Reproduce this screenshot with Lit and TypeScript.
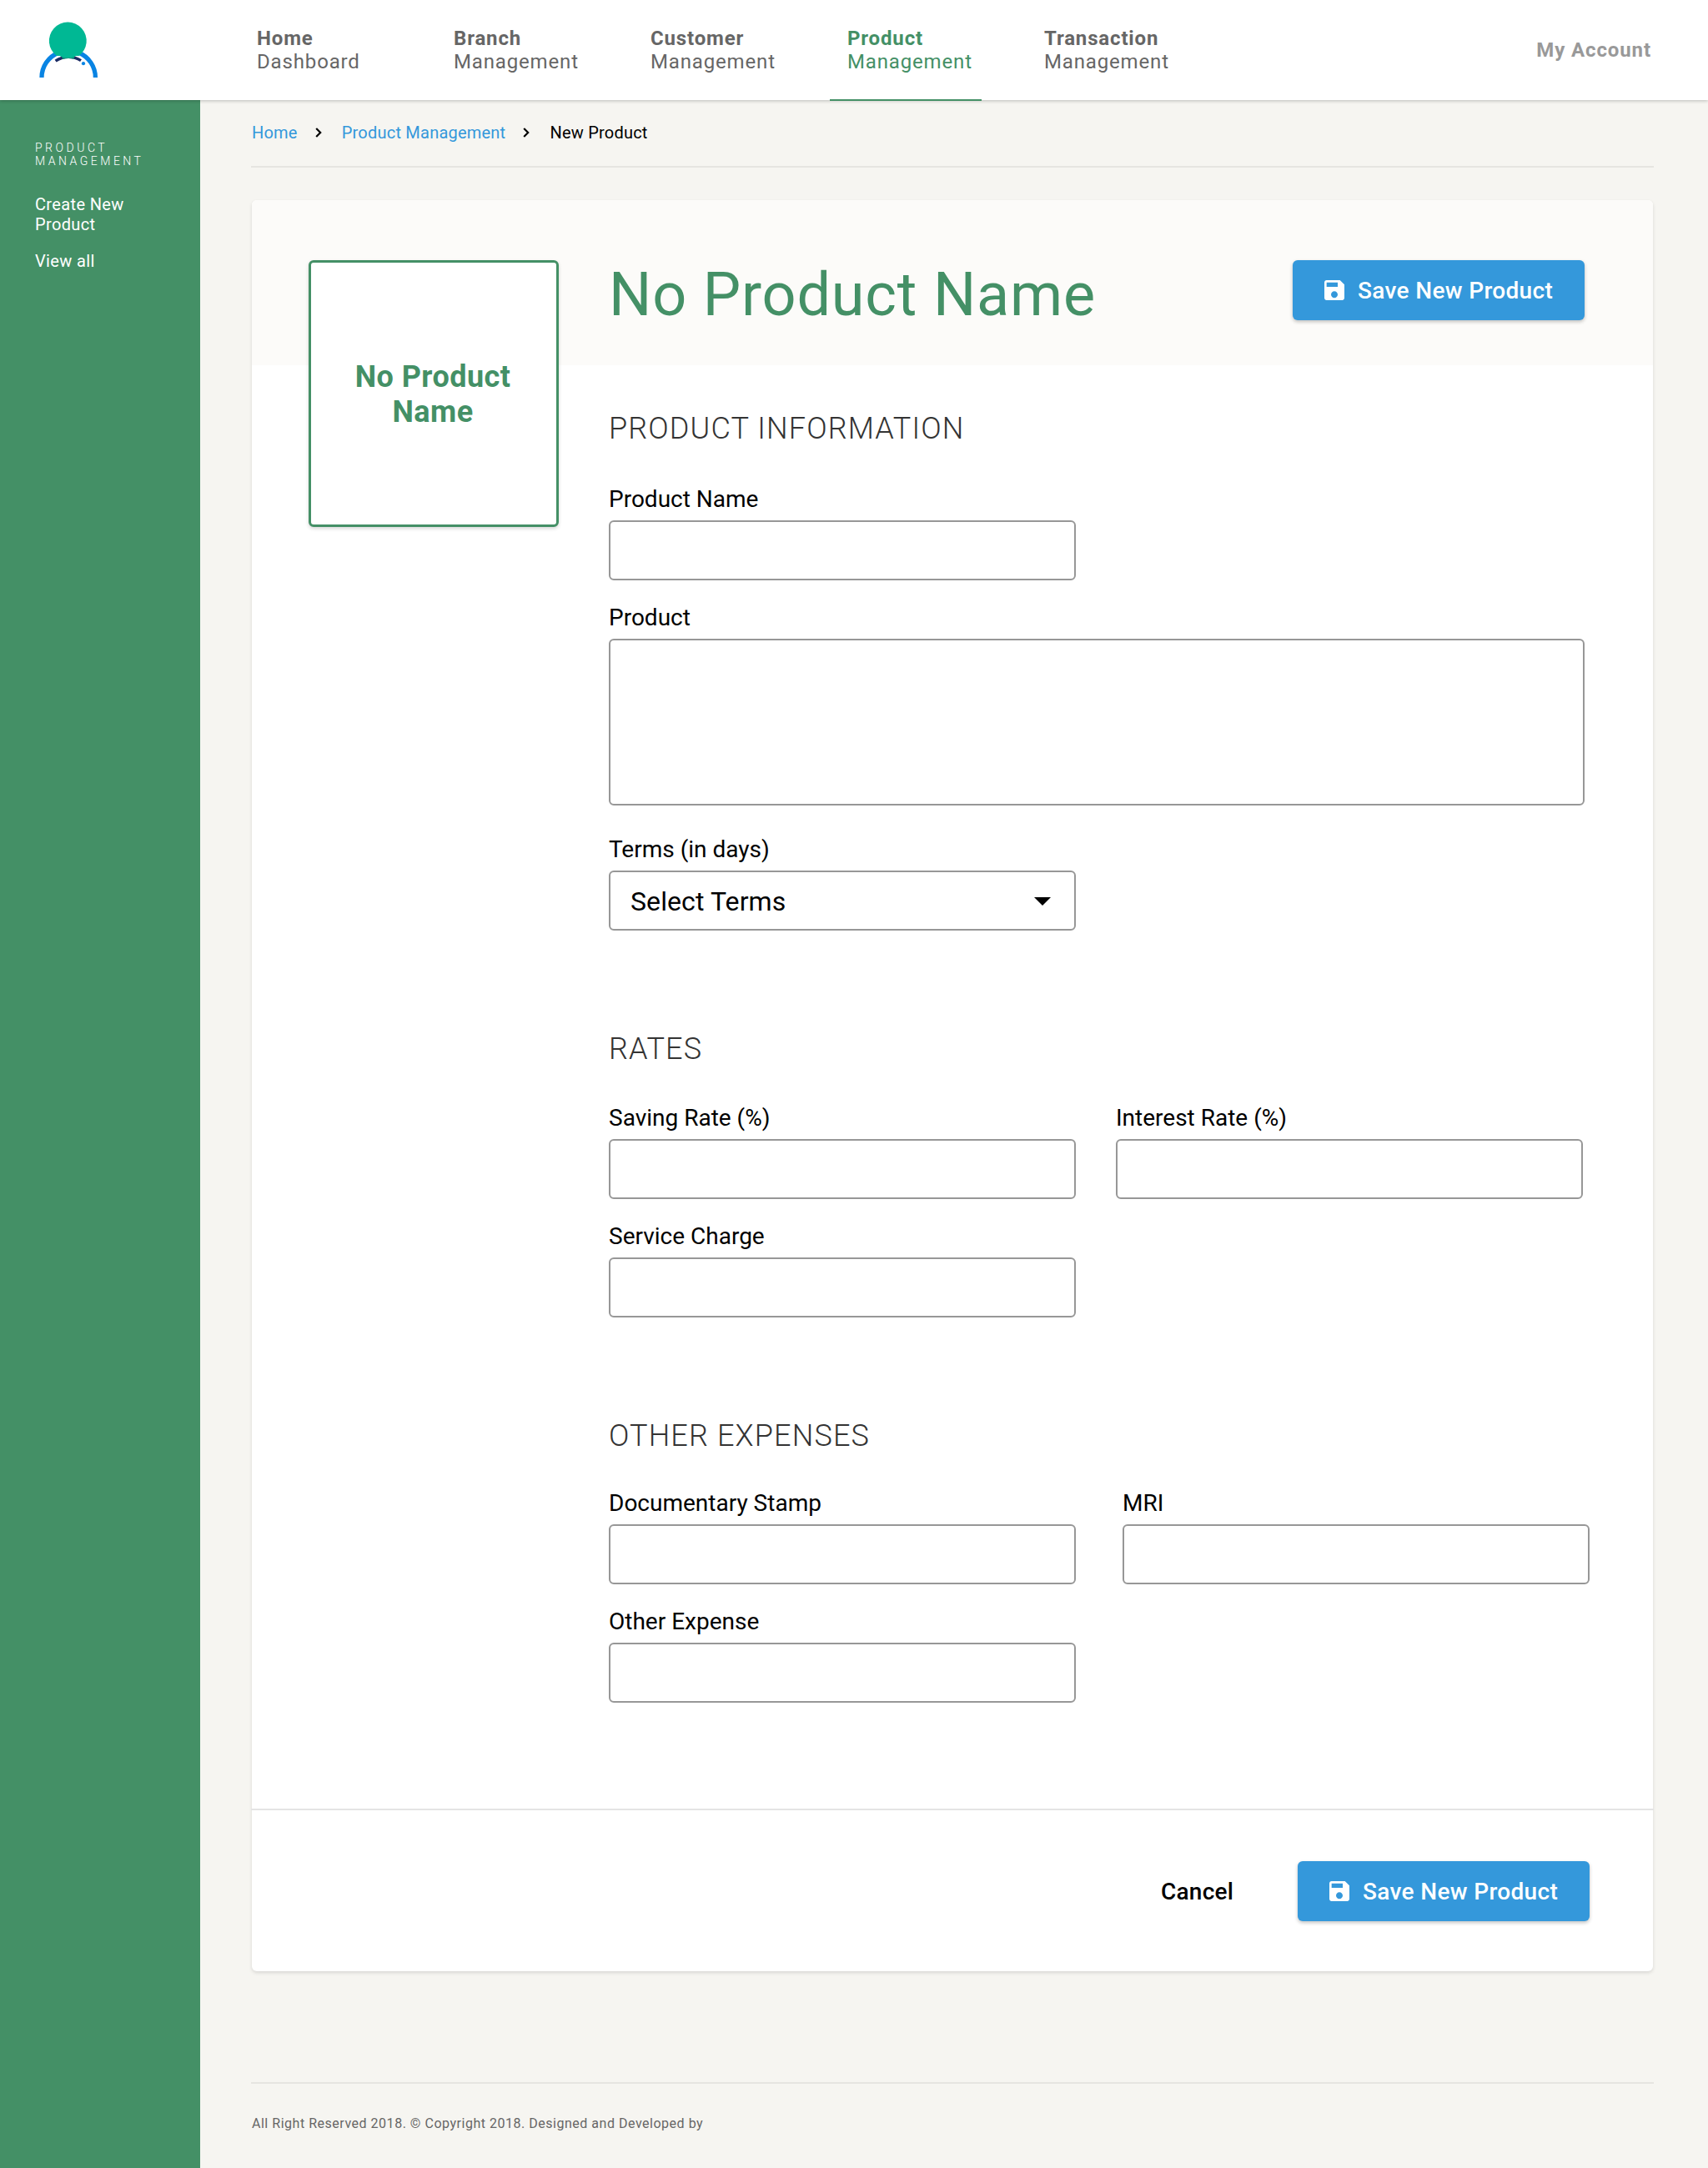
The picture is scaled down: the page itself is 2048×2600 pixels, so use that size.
import { LitElement, html, css, svg, nothing } from "lit";
import { customElement, property } from "lit/decorators.js";
import { classMap } from "lit/directives/class-map.js";

@customElement("save-button")
class SaveButton extends LitElement {
  static styles = css`
    :host { display: block; }
    .save {
      box-sizing: border-box; display: flex; align-items: center; gap: 12px;
      width: 350px; height: 72px; margin: 0; padding: 0 0 0 34px; border: 0; border-radius: 6px;
      background: #3498db; color: #fff; box-shadow: 0 2px 4px rgba(0, 0, 0, 0.24);
      font: 500 28px/32px Roboto, sans-serif; letter-spacing: 0.34px; white-space: nowrap;
    }
    .icon { flex: none; width: 32px; height: 32px; fill: #fff; }
    .text { padding-top: 2px; }
  `;
  render() {
    return html`<button class="save">
      <svg class="icon" viewBox="0 0 24 24"><path d="M17 3H5c-1.11 0-2 .9-2 2v14c0 1.1.89 2 2 2h14c1.1 0 2-.9 2-2V7l-4-4zm-5 16c-1.66 0-3-1.34-3-3s1.34-3 3-3 3 1.34 3 3-1.34 3-3 3zm3-10H5V5h10v4z"/></svg>
      <span class="text">Save New Product</span>
    </button>`;
  }
}

@customElement("form-field")
class FormField extends LitElement {
  @property() label = "";
  @property() kind: "input" | "area" | "select" = "input";
  static styles = css`
    :host { display: block; }
    .field { display: flex; flex-direction: column; gap: 8px; font: 28px/34px Roboto, sans-serif; color: #000; }
    .control {
      box-sizing: border-box; display: block; width: 560px; height: 72px; margin: 0; padding: 0 25px;
      border: 2px solid #979797; border-radius: 6px; background: #fff; outline: none;
      font: 32px/38px Roboto, sans-serif; color: #000;
    }
    .area { width: 1170px; height: 200px; padding: 15px 25px; resize: none; }
    .select { display: flex; align-items: center; justify-content: space-between; padding: 2px 28px 0 24px; letter-spacing: 0.1px; }
    .caret { width: 20px; height: 10px; }
  `;
  render() {
    return html`<label class="field">
      <span>${this.label}</span>
      ${this.kind === "area"
        ? html`<textarea class="control area"></textarea>`
        : this.kind === "select"
          ? html`<span class="control select"><span>Select Terms</span><svg class="caret" viewBox="0 0 20 10"><path d="M0 0h20L10 10z"/></svg></span>`
          : html`<input class="control" type="text">`}
    </label>`;
  }
}

const NAV = [
  ["Home", "Dashboard"],
  ["Branch", "Management"],
  ["Customer", "Management"],
  ["Product", "Management"],
  ["Transaction", "Management"],
];

const CRUMBS = ["Home", "Product Management", "New Product"];

@customElement("app-root")
class AppRoot extends LitElement {
  static styles = css`
    :host {
      display: flex; flex-direction: column; width: 2048px; height: 2600px; overflow: hidden;
      background: #f6f5f1; font-family: Roboto, sans-serif; color: #000;
    }
    .header {
      position: relative; z-index: 1; flex: none; display: flex; align-items: center; height: 120px;
      background: #fff; box-shadow: 0 1px 4px rgba(0, 0, 0, 0.24);
    }
    .brand { flex: none; width: 287px; height: 120px; }
    .logo { display: block; width: 160px; height: 120px; }
    .nav { flex: 1; display: flex; gap: 54px; }
    .item {
      position: relative; box-sizing: border-box; width: 182px; height: 120px; padding: 32px 0 0 21px;
      display: flex; flex-direction: column; font-size: 24px; line-height: 28px; font-weight: 400;
      letter-spacing: 0.85px; color: #666; white-space: nowrap;
    }
    .item b { font-weight: 700; letter-spacing: 0.85px; }
    .item.active { color: #449066; }
    .item.active::after { content: ""; position: absolute; left: 0; right: 0; bottom: -1px; height: 2px; background: #449066; }
    .account { padding-right: 68px; font-size: 24px; line-height: 28px; font-weight: 700; letter-spacing: 0.9px; color: #999; }

    .body { flex: 1; display: flex; min-height: 0; }
    .sidebar {
      flex: none; box-sizing: border-box; width: 240px; padding: 49px 39px 0 42px;
      background: #449066; color: #fff;
    }
    .side-title { margin: 0 0 32px; font-size: 14px; line-height: 16px; font-weight: 300; letter-spacing: 3.5px; }
    .side-link { margin: 0 0 20px; width: 120px; font-size: 20px; line-height: 24px; letter-spacing: 0.35px; }

    .main { flex: none; width: 1682px; margin-left: 61px; padding-top: 27px; }
    .crumbs { display: flex; height: 24px; padding-left: 1px; font-size: 20px; line-height: 24px; letter-spacing: 0.22px; white-space: nowrap; }
    .link { color: #3498db; }
    .chevron { width: 8px; height: 12px; margin: 5.5px 24px 0 21px; fill: none; stroke: #000; stroke-width: 2.2; }
    .rule { height: 2px; background: #e6e5e1; }
    .top-rule { margin: 28px 0 39px; }

    .card {
      width: 1680px; margin-left: 1px; height: 2124px; border-radius: 6px; background: #fff;
      box-shadow: 0 2px 4px rgba(0, 0, 0, 0.12);
    }
    .card-head {
      box-sizing: border-box; display: flex; align-items: flex-start; height: 198px; padding: 72px 82px 0 68px;
      background: #fcfbf9; border-radius: 6px 6px 0 0;
    }
    .tile {
      box-sizing: border-box; flex: none; display: flex; align-items: center; justify-content: center;
      width: 300px; height: 320px; padding: 2px 41px 0 39px; border: 3px solid #449066; border-radius: 6px; background: #fff;
      box-shadow: 0 2px 4px rgba(0, 0, 0, 0.16);
      color: #449066; font-size: 36px; line-height: 42px; font-weight: 700; letter-spacing: 0.45px; text-align: center;
    }
    .title {
      flex: 1; margin: 0 0 0 60px; color: #449066; font-size: 72px; line-height: 84px; font-weight: 400;
      letter-spacing: 0.82px; white-space: nowrap;
    }
    .form { display: flex; flex-direction: column; gap: 121px; padding: 55px 0 127px 428px; }
    .section { display: flex; flex-direction: column; }
    .section h2 {
      margin: 0 0 47px; color: #333; font-size: 36px; line-height: 42px; font-weight: 300; letter-spacing: 1.15px;
    }
    .rates h2 { margin-bottom: 45px; }
    .other h2 { margin-bottom: 43px; }
    .rows { display: flex; flex-direction: column; gap: 28px; }
    .rows .after-area { margin-top: 8px; }
    .pair { display: flex; gap: 48px; }
    .other .pair { gap: 56px; }
    .card-rule { margin: 0 -1px; background: #e4e4e4; }
    .actions { display: flex; align-items: center; justify-content: flex-end; gap: 77px; padding: 61px 76px 0 0; }
    .cancel { padding-top: 2px; font-size: 28px; line-height: 32px; font-weight: 500; letter-spacing: 0.2px; }

    .foot-rule { margin-top: 133px; }
    .copyright { margin: 38px 0 0 1px; color: #666; font-size: 16px; line-height: 20px; letter-spacing: 0.52px; }
  `;

  private logo() {
    return svg`
      <path d="M50 93a32.2 32.2 0 0 1 64.4 0" fill="none" stroke="#0984e3" stroke-width="5.3" stroke-dasharray="38 25.2 40"/>
      <path d="M66.6 73.2a27 27 0 0 1 30.4 -0.6" fill="none" stroke="#1b2a63" stroke-width="3.4"/>
      <path d="M74.5 69.4a27 27 0 0 1 14.6 -0.2" fill="none" stroke="#0a8f78" stroke-width="3.4"/>
      <path d="M68 67a22.4 22.4 0 1 1 26.6 0z" fill="#00b894"/>
      <circle cx="81.3" cy="49" r="20.6" fill="#00b894"/>
      <circle cx="100" cy="76.2" r="2.1" fill="#0984e3"/>`;
  }

  render() {
    return html`
      <header class="header">
        <div class="brand"><svg class="logo" viewBox="0 0 160 120">${this.logo()}</svg></div>
        <nav class="nav">
          ${NAV.map(([a, b]) => html`<a class=${classMap({ item: true, active: a === "Product" })}><b>${a}</b><span>${b}</span></a>`)}
        </nav>
        <div class="account">My Account</div>
      </header>
      <div class="body">
        <aside class="sidebar">
          <p class="side-title">PRODUCT MANAGEMENT</p>
          <p class="side-link">Create New Product</p>
          <p class="side-link">View all</p>
        </aside>
        <main class="main">
          <div class="crumbs">
            ${CRUMBS.map((c, i) => html`${i ? html`<svg class="chevron" viewBox="0 0 8 12"><path d="M1.2 1L6.2 6L1.2 11"/></svg>` : nothing}<span class=${i < 2 ? "link" : ""}>${c}</span>`)}
          </div>
          <div class="rule top-rule"></div>
          <section class="card">
            <div class="card-head">
              <div class="tile">No Product Name</div>
              <h1 class="title">No Product Name</h1>
              <save-button></save-button>
            </div>
            <div class="form">
              <div class="section">
                <h2>PRODUCT INFORMATION</h2>
                <div class="rows">
                  <form-field label="Product Name"></form-field>
                  <form-field label="Product" kind="area"></form-field>
                  <form-field class="after-area" label="Terms (in days)" kind="select"></form-field>
                </div>
              </div>
              <div class="section rates">
                <h2>RATES</h2>
                <div class="rows">
                  <div class="pair"><form-field label="Saving Rate (%)"></form-field><form-field label="Interest Rate (%)"></form-field></div>
                  <form-field label="Service Charge"></form-field>
                </div>
              </div>
              <div class="section other">
                <h2>OTHER EXPENSES</h2>
                <div class="rows">
                  <div class="pair"><form-field label="Documentary Stamp"></form-field><form-field label="MRI"></form-field></div>
                  <form-field label="Other Expense"></form-field>
                </div>
              </div>
            </div>
            <div class="rule card-rule"></div>
            <div class="actions"><span class="cancel">Cancel</span><save-button></save-button></div>
          </section>
          <div class="rule foot-rule"></div>
          <p class="copyright">All Right Reserved 2018. © Copyright 2018. Designed and Developed by</p>
        </main>
      </div>`;
  }
}
